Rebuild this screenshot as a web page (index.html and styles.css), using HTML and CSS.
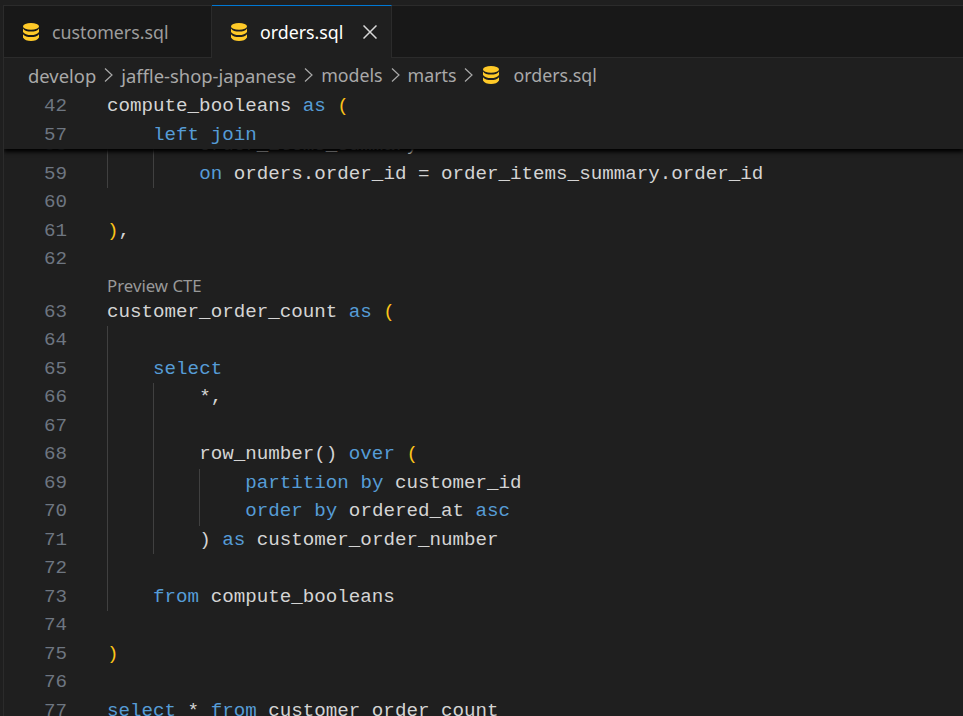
FILE: index.html
```html
<!DOCTYPE html>
<html lang="en">
<head>
    <meta charset="UTF-8">
    <meta name="viewport" content="width=device-width, initial-scale=1.0">
    <title>orders.sql</title>
    <link rel="stylesheet" href="styles.css">
</head>
<body>
    <svg class="defs" width="0" height="0">
        <symbol id="db" viewBox="0 0 16 18">
            <ellipse cx="8" cy="3.400" rx="8" ry="3.400"/>
            <path d="M0 5.400C1.200 7.700 4.600 8.500 8 8.500s6.800-.8 8-3.100v3.500C14.900 11 11.500 12 8 12S1.100 11 0 8.900z"/>
            <path d="M0 11.200C1.200 13.200 4.600 14 8 14s6.800-.8 8-2.800v3.300C14.900 16.900 11.500 18 8 18s-6.900-1.100-8-3.500z"/>
        </symbol>
    </svg>
    <div class="window">
        <div class="tabs">
            <div class="tab">
                <svg class="file-icon"><use href="#db"/></svg>
                <span>customers.sql</span>
            </div>
            <div class="tab active">
                <svg class="file-icon"><use href="#db"/></svg>
                <span>orders.sql</span>
                <svg class="close" viewBox="0 0 14 14"><path d="M.5.5l13 13M13.500.5l-13 13"/></svg>
            </div>
        </div>
        <div class="crumbs">
            <span>develop</span>
            <svg class="chevron" viewBox="0 0 9 14"><path d="M1 .5L8 7l-7 6.500"/></svg>
            <span>jaffle-shop-japanese</span>
            <svg class="chevron" viewBox="0 0 9 14"><path d="M1 .5L8 7l-7 6.500"/></svg>
            <span class="crumb-small">models</span>
            <svg class="chevron" viewBox="0 0 9 14"><path d="M1 .5L8 7l-7 6.500"/></svg>
            <span class="crumb-small">marts</span>
            <svg class="chevron" viewBox="0 0 9 14"><path d="M1 .5L8 7l-7 6.500"/></svg>
            <svg class="file-icon crumb-icon"><use href="#db"/></svg>
            <span class="crumb-small crumb-file">orders.sql</span>
        </div>
        <div class="editor">
            <div class="sticky">
                <div class="line"><span class="num">42</span><div class="code"><span class="text">compute_booleans <b>as</b> <i>(</i></span></div></div>
                <div class="line"><span class="num">57</span><div class="code"><u></u><span class="text"><b>left join</b></span></div></div>
            </div>
            <div class="lines">
                <div class="line"><span class="num">58</span><div class="code"><u class="g"></u><u class="g"></u><span class="text">order_items_summary</span></div></div>
                <div class="line"><span class="num">59</span><div class="code"><u class="g"></u><u class="g"></u><span class="text"><b>on</b> orders.order_id = order_items_summary.order_id</span></div></div>
                <div class="line"><span class="num">60</span><div class="code"></div></div>
                <div class="line"><span class="num">61</span><div class="code"><span class="text"><i>)</i>,</span></div></div>
                <div class="line"><span class="num">62</span><div class="code"></div></div>
                <div class="lens">Preview CTE</div>
                <div class="line"><span class="num">63</span><div class="code"><span class="text">customer_order_count <b>as</b> <i>(</i></span></div></div>
                <div class="line"><span class="num">64</span><div class="code"><u class="g"></u></div></div>
                <div class="line"><span class="num">65</span><div class="code"><u class="g"></u><span class="text"><b>select</b></span></div></div>
                <div class="line"><span class="num">66</span><div class="code"><u class="g"></u><u class="g"></u><span class="text">*,</span></div></div>
                <div class="line"><span class="num">67</span><div class="code"><u class="g"></u><u class="g"></u></div></div>
                <div class="line"><span class="num">68</span><div class="code"><u class="g"></u><u class="g"></u><span class="text">row_number() <b>over</b> <i>(</i></span></div></div>
                <div class="line"><span class="num">69</span><div class="code"><u class="g"></u><u class="g"></u><u class="g"></u><span class="text"><b>partition by</b> customer_id</span></div></div>
                <div class="line"><span class="num">70</span><div class="code"><u class="g"></u><u class="g"></u><u class="g"></u><span class="text"><b>order by</b> ordered_at <b>asc</b></span></div></div>
                <div class="line"><span class="num">71</span><div class="code"><u class="g"></u><u class="g"></u><span class="text">) <b>as</b> customer_order_number</span></div></div>
                <div class="line"><span class="num">72</span><div class="code"><u class="g"></u></div></div>
                <div class="line"><span class="num">73</span><div class="code"><u class="g"></u><span class="text"><b>from</b> compute_booleans</span></div></div>
                <div class="line"><span class="num">74</span><div class="code"></div></div>
                <div class="line"><span class="num">75</span><div class="code"><span class="text"><i>)</i></span></div></div>
                <div class="line"><span class="num">76</span><div class="code"></div></div>
                <div class="line"><span class="num">77</span><div class="code"><span class="text"><b>select</b> * <b>from</b> customer_order_count</span></div></div>
            </div>
        </div>
    </div>
</body>
</html>
```
FILE: styles.css
```css
html, body {
    height: 100%;
    margin: 0;
}
body {
    background: #1f1f1f;
    overflow: hidden;
    font-family: "Noto Sans", "Open Sans", sans-serif;
}
.defs {
    position: absolute;
}
.window {
    height: 100%;
    box-sizing: border-box;
    padding-top: 5px;
    display: flex;
    flex-direction: column;
}
.tabs {
    display: flex;
    height: 53px;
    flex: none;
    box-sizing: border-box;
    margin-left: 3px;
    background: #181818;
    border-top: 1px solid #2b2b2b;
    border-left: 1px solid #2b2b2b;
    border-bottom: 1px solid #2b2b2b;
}
.tab {
    display: flex;
    align-items: center;
    width: 208px;
    box-sizing: border-box;
    padding-left: 19px;
    gap: 13px;
    margin-bottom: -1px;
    border-right: 1px solid #2b2b2b;
    color: #9d9d9d;
    font-size: 17.8px;
}
.tab.active {
    width: 180px;
    padding-left: 19px;
    background: #1f1f1f;
    color: #ffffff;
    border-top: 1px solid #0078d4;
    margin-top: -1px;
}
.file-icon {
    width: 16px;
    height: 18px;
    flex: none;
    fill: #ffca28;
}
.close {
    width: 14px;
    height: 14px;
    margin-left: 7px;
    stroke: #d8d8d8;
    stroke-width: 1.5;
    fill: none;
}
.crumbs {
    display: flex;
    align-items: center;
    height: 34px;
    flex: none;
    margin-left: 3px;
    padding-left: 24px;
    gap: 8px;
    box-sizing: border-box;
    border-left: 1px solid #2b2b2b;
    color: #a9a9a9;
    font-size: 18.4px;
}
.crumb-small {
    font-size: 17.8px;
}
.chevron {
    width: 9px;
    height: 14px;
    stroke: #a9a9a9;
    stroke-width: 1.2;
    fill: none;
}
.crumb-icon {
    margin-left: 2px;
}
.crumb-file {
    margin-left: 6px;
}
.editor {
    flex: 1;
    position: relative;
    overflow: hidden;
    margin-left: 3px;
    border-left: 1px solid #2b2b2b;
    font-family: "Liberation Mono", monospace;
    font-size: 19.2px;
    color: #d4d4d4;
}
.lines {
    padding-top: 39.25px;
}
.sticky {
    position: absolute;
    top: 0;
    left: 0;
    right: 0;
    height: 57px;
    background: #1f1f1f;
    box-shadow: 0 3px 4px #000;
    z-index: 1;
}
.line {
    display: flex;
    height: 28.5px;
    line-height: 28.5px;
}
.num {
    width: 63px;
    flex: none;
    text-align: right;
    color: #6e7681;
}
.code {
    display: flex;
    margin-left: 40px;
}
.text {
    white-space: pre;
}
.code b {
    font-weight: normal;
    color: #569cd6;
}
.code i {
    font-style: normal;
    color: #fcc419;
}
.code u {
    display: block;
    text-decoration: none;
    width: 46.08px;
    flex: none;
}
.code .g {
    box-sizing: border-box;
    border-left: 1px solid #404040;
}
.lens {
    height: 24px;
    line-height: 24px;
    margin-left: 103px;
    font-family: "Noto Sans", sans-serif;
    font-size: 16.8px;
    color: #999999;
}
```
